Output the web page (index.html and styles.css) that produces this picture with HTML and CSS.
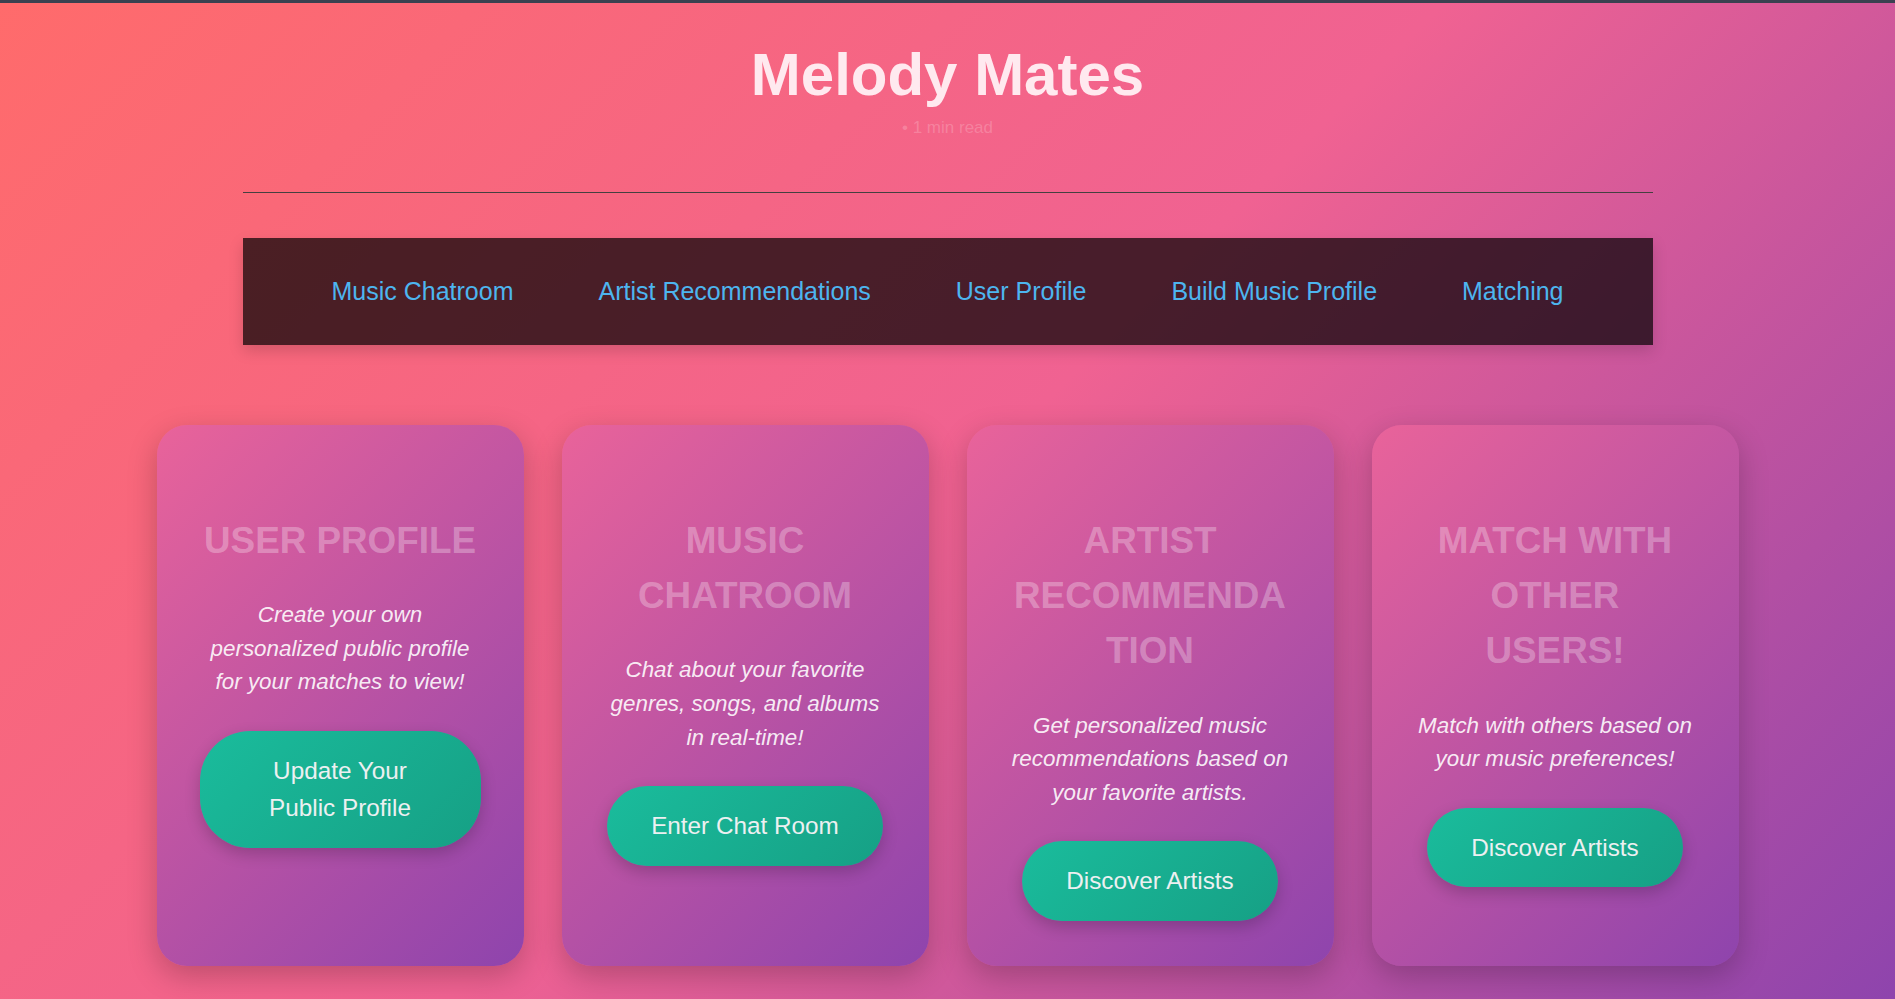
FILE: index.html
```html
<!DOCTYPE html>
<html lang="en">
<head>
<meta charset="utf-8">
<title>Melody Mates</title>
<link rel="stylesheet" href="styles.css">
</head>
<body>
<div class="topbar"></div>
<header class="header">
  <h1 class="title">Melody Mates</h1>
  <div class="meta">• 1 min read</div>
</header>
<div class="container">
  <hr class="divider">
  <nav class="nav">
    <a class="nav-link" href="#">Music Chatroom</a>
    <a class="nav-link" href="#">Artist Recommendations</a>
    <a class="nav-link" href="#">User Profile</a>
    <a class="nav-link" href="#">Build Music Profile</a>
    <a class="nav-link" href="#">Matching</a>
  </nav>
</div>
<section class="cards">
  <div class="card">
    <h2 class="card-title">User Profile</h2>
    <p class="card-text">Create your own personalized public profile for your matches to view!</p>
    <a class="btn" href="#">Update Your Public Profile</a>
  </div>
  <div class="card">
    <h2 class="card-title">Music Chatroom</h2>
    <p class="card-text">Chat about your favorite genres, songs, and albums in real-time!</p>
    <a class="btn" href="#">Enter Chat Room</a>
  </div>
  <div class="card">
    <h2 class="card-title">Artist Recommendation</h2>
    <p class="card-text">Get personalized music recommendations based on your favorite artists.</p>
    <a class="btn" href="#">Discover Artists</a>
  </div>
  <div class="card">
    <h2 class="card-title">Match with other users!</h2>
    <p class="card-text">Match with others based on your music preferences!</p>
    <a class="btn" href="#">Discover Artists</a>
  </div>
</section>
</body>
</html>
```
FILE: styles.css
```css
html, body {
  margin: 0;
  padding: 0;
}
body {
  min-height: 100vh;
  box-sizing: border-box;
  font-family: "Liberation Sans", Arial, sans-serif;
  background: linear-gradient(135deg, #ff6b6b 0%, #f06292 50%, #8e44ad 100%);
  padding-bottom: 30px;
}
.topbar {
  height: 3px;
  background: #3a4150;
}
.header {
  text-align: center;
}
.title {
  margin: 37px 0 0;
  font-size: 60px;
  line-height: 69px;
  font-weight: 700;
  color: #ffe9ef;
}
.meta {
  margin-top: 9px;
  font-size: 17px;
  line-height: 20px;
  color: rgba(255, 255, 255, 0.2);
}
.container {
  max-width: 1410px;
  margin: 0 auto;
}
.divider {
  margin: 54px 0 0;
  height: 0;
  border: 0;
  border-top: 1px solid #454040;
}
.nav {
  margin-top: 45px;
  height: 107px;
  display: flex;
  align-items: center;
  justify-content: center;
  gap: 85px;
  background: rgba(0, 0, 0, 0.7);
  box-shadow: 0 6px 14px rgba(0, 0, 0, 0.15);
}
.nav-link {
  color: #4db5ef;
  text-decoration: none;
  font-size: 25px;
  line-height: 37px;
}
.cards {
  margin-top: 80px;
  display: flex;
  justify-content: center;
  gap: 38px;
}
.card {
  width: 367px;
  box-sizing: border-box;
  padding: 88px 43px 45px;
  border-radius: 30px;
  background: linear-gradient(135deg, #e9639a 0%, #8e44ad 100%);
  box-shadow: 0 10px 30px rgba(0, 0, 0, 0.22);
  text-align: center;
}
.card-title {
  margin: 0 3px 30px;
  font-size: 36.8px;
  line-height: 55.2px;
  font-weight: 700;
  text-transform: uppercase;
  color: rgba(255, 255, 255, 0.3);
  overflow-wrap: anywhere;
}
.card-text {
  margin: 0 0 32px;
  font-size: 22.4px;
  line-height: 33.6px;
  font-style: italic;
  color: rgba(255, 255, 255, 0.9);
}
.btn {
  display: inline-block;
  vertical-align: top;
  padding: 21px 44px;
  font-size: 24.3px;
  line-height: 37.5px;
  color: #ecf0f1;
  text-decoration: none;
  border-radius: 50px;
  background: linear-gradient(135deg, #1abc9c 0%, #16a085 100%);
  box-shadow: 0 6px 16px rgba(0, 0, 0, 0.2);
}
```
